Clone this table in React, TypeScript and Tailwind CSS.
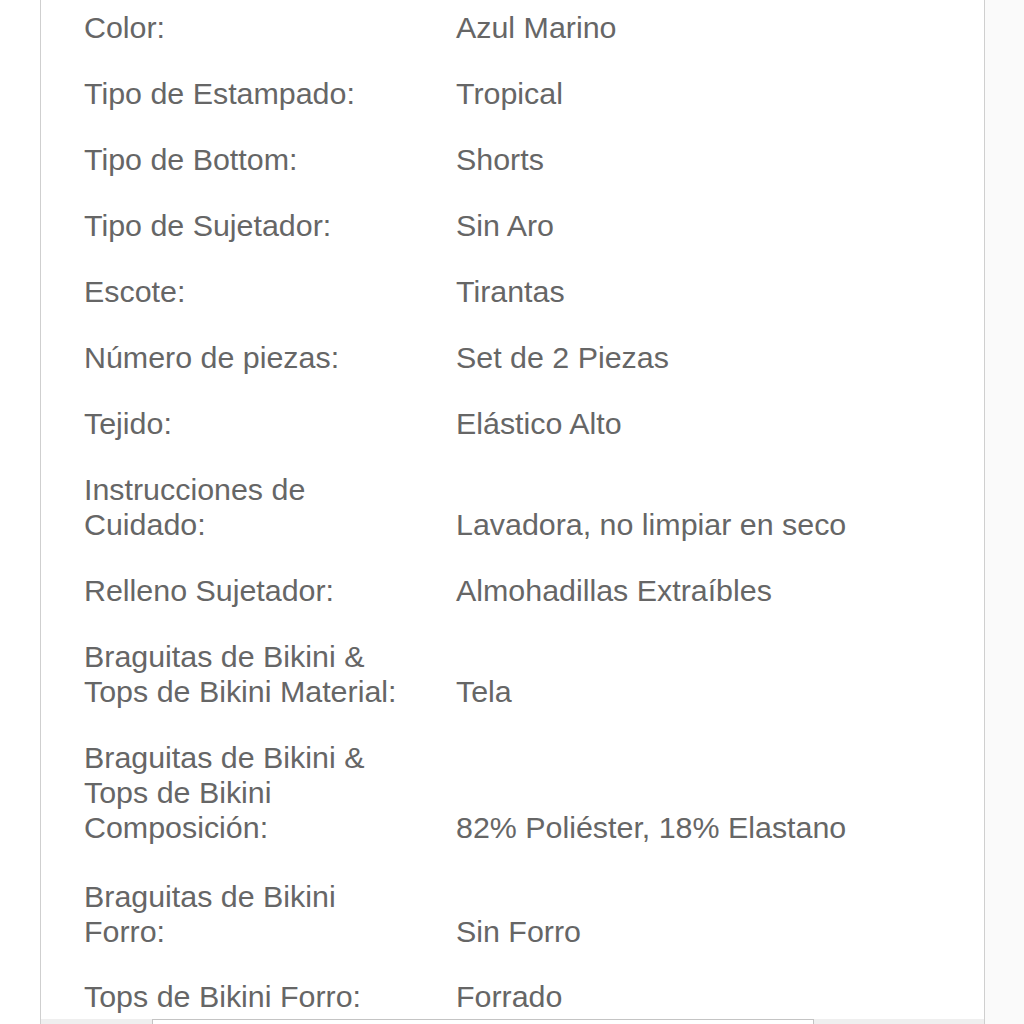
import React from 'react'

type Row = { label: string[]; value: string; extra?: boolean }

const rows: Row[] = [
  { label: ['Color:'], value: 'Azul Marino' },
  { label: ['Tipo de Estampado:'], value: 'Tropical' },
  { label: ['Tipo de Bottom:'], value: 'Shorts' },
  { label: ['Tipo de Sujetador:'], value: 'Sin Aro' },
  { label: ['Escote:'], value: 'Tirantas' },
  { label: ['Número de piezas:'], value: 'Set de 2 Piezas' },
  { label: ['Tejido:'], value: 'Elástico Alto' },
  { label: ['Instrucciones de', 'Cuidado:'], value: 'Lavadora, no limpiar en seco' },
  { label: ['Relleno Sujetador:'], value: 'Almohadillas Extraíbles' },
  { label: ['Braguitas de Bikini &', 'Tops de Bikini Material:'], value: 'Tela' },
  { label: ['Braguitas de Bikini &', 'Tops de Bikini', 'Composición:'], value: '82% Poliéster, 18% Elastano' },
  { label: ['Braguitas de Bikini', 'Forro:'], value: 'Sin Forro', extra: true },
  { label: ['Tops de Bikini Forro:'], value: 'Forrado' },
]

export default function App() {
  return (
    <div className="w-[1024px] h-[1024px] overflow-hidden bg-white flex font-['Liberation_Sans',Arial,sans-serif]">
      <div className="w-[40px] shrink-0 bg-white" />
      <div className="w-[945px] shrink-0 h-full flex flex-col border-l border-r border-[#cfcfcf] bg-white">
        <div className="flex-1 overflow-hidden">
          <div className="mt-[-6px] pl-[43px] text-[30.4px] leading-[35px] text-[#666]">
            {rows.map((r, i) => (
              <div
                key={i}
                className={
                  r.extra
                    ? 'grid grid-cols-[372px_1fr] items-end pt-[18.5px] pb-[14.5px]'
                    : 'grid grid-cols-[372px_1fr] items-end pt-[15.5px] pb-[15.5px]'
                }
              >
                <div className="flex flex-col">
                  {r.label.map((l, j) => (
                    <span key={j}>{l}</span>
                  ))}
                </div>
                <div>{r.value}</div>
              </div>
            ))}
          </div>
        </div>
        <div className="h-[5px] shrink-0 bg-[#efefef] pl-[111px]">
          <div className="w-[662px] h-full bg-white border border-b-0 border-[#c4c4c4]" />
        </div>
      </div>
      <div className="flex-1 bg-[#fafafa]" />
    </div>
  )
}
